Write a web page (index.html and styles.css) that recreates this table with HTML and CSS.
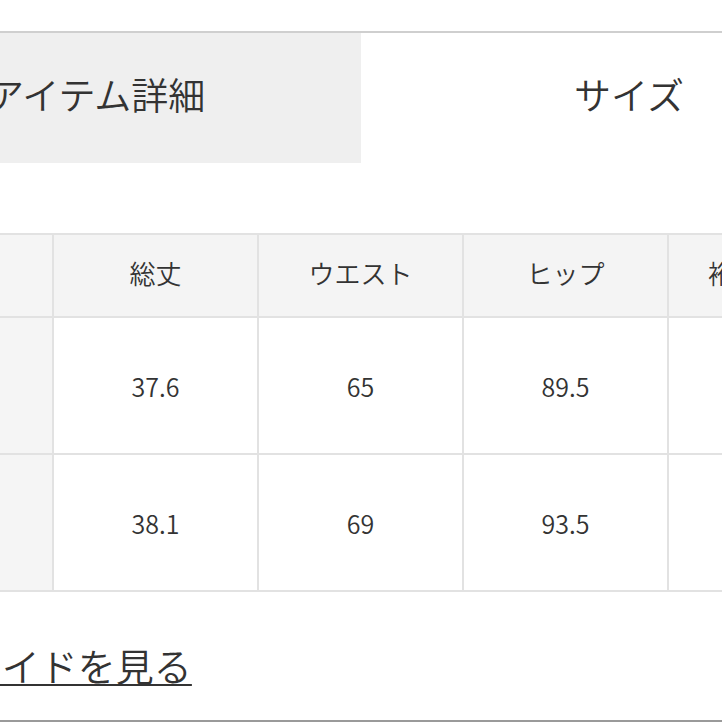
FILE: index.html
```html
<!DOCTYPE html>
<html lang="ja">
<head>
<meta charset="utf-8">
<title>サイズ</title>
<link rel="stylesheet" href="styles.css">
</head>
<body>
<div class="page">
  <div class="tabs">
    <div class="tab tab-muted"><span class="tab-label tab-label-left">アイテム詳細</span></div>
    <div class="tab tab-current"><span class="tab-label tab-label-right">サイズ</span></div>
  </div>

  <table class="size-table">
    <colgroup>
      <col class="col-label">
      <col class="col-value">
      <col class="col-value">
      <col class="col-value">
      <col class="col-value">
    </colgroup>
    <thead>
      <tr class="head-row">
        <th class="label-cell"></th>
        <th>総丈</th>
        <th>ウエスト</th>
        <th>ヒップ</th>
        <th class="partial-cell">裄丈</th>
      </tr>
    </thead>
    <tbody>
      <tr class="body-row">
        <th class="label-cell"></th>
        <td>37.6</td>
        <td>65</td>
        <td>89.5</td>
        <td class="partial-cell"></td>
      </tr>
      <tr class="body-row">
        <th class="label-cell"></th>
        <td>38.1</td>
        <td>69</td>
        <td>93.5</td>
        <td class="partial-cell"></td>
      </tr>
    </tbody>
  </table>

  <div class="guide">
    <a class="guide-link" href="#">サイズガイドを見る</a>
  </div>
  <div class="bottom-rule"></div>
</div>
</body>
</html>
```

FILE: styles.css
```css
html, body {
  margin: 0;
  padding: 0;
  background: #ffffff;
}

body {
  width: 722px;
  height: 722px;
  overflow: hidden;
  font-family: "Noto Sans CJK JP", "Noto Sans", sans-serif;
  color: #333333;
}

.page {
  padding-top: 31px;
  display: flex;
  flex-direction: column;
}

.tabs {
  display: flex;
  border-top: 2px solid #cfcfcf;
  height: 130px;
}

.tab {
  display: flex;
  align-items: center;
  padding-bottom: 8px;
  box-sizing: border-box;
  overflow: hidden;
}

.tab-muted {
  width: 361px;
  background: #efefef;
}

.tab-current {
  flex: 1;
  background: #ffffff;
}

.tab-label {
  font-size: 37px;
  font-weight: 350;
  line-height: 1;
  white-space: nowrap;
  color: #333333;
}

.tab-label-left {
  margin-left: -13px;
}

.tab-label-right {
  margin-left: 213px;
}

.size-table {
  margin-top: 70px;
  margin-left: -2px;
  border-collapse: collapse;
  table-layout: fixed;
  width: 874px;
}

.col-label {
  width: 54px;
}

.col-value {
  width: 205px;
}

.size-table th,
.size-table td {
  border: 2px solid #e2e2e2;
  padding: 0;
  text-align: center;
  vertical-align: middle;
  font-weight: 350;
  white-space: nowrap;
  overflow: hidden;
}

.head-row {
  height: 83px;
}

.head-row th {
  background: #f4f4f4;
  font-size: 26px;
  color: #333333;
  padding-bottom: 7px;
}

.body-row {
  height: 137px;
}

.body-row td {
  background: #ffffff;
  font-size: 25px;
  color: #333333;
}

.size-table .label-cell {
  background: #f5f5f5;
}

.size-table .partial-cell {
  text-align: left;
  padding-left: 39px;
}

.guide {
  margin-top: 50px;
  height: 48px;
  overflow: hidden;
  white-space: nowrap;
}

.guide-link {
  display: inline-block;
  margin-left: -149px;
  font-size: 38px;
  font-weight: 350;
  line-height: 46px;
  color: #333333;
  text-decoration: underline;
  text-decoration-thickness: 2px;
  text-underline-offset: 3px;
}

.bottom-rule {
  margin-top: 30px;
  border-top: 2px solid #9a9a9a;
}
```
